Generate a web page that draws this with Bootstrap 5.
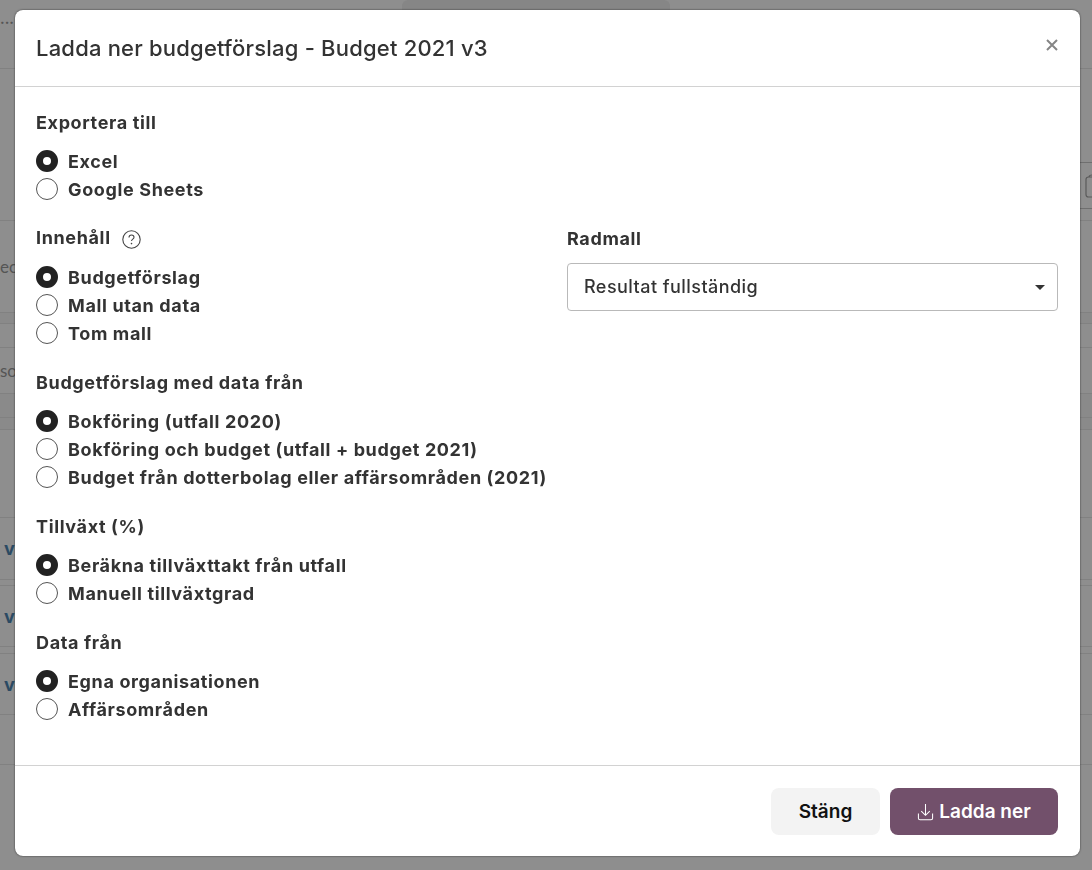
<!DOCTYPE html>
<html lang="sv">
<head>
    <meta charset="UTF-8">
    <meta name="viewport" content="width=device-width, initial-scale=1.0">
    <title>Ladda ner budgetförslag</title>
    <link href="https://cdn.jsdelivr.net/npm/bootstrap@5.3.0/dist/css/bootstrap.min.css" rel="stylesheet">
    <style>
        html, body {
            height: 100%;
        }
        body {
            background-color: #8e8e8e;
            font-family: Inter, "Liberation Sans", sans-serif;
            color: #333;
            overflow: hidden;
        }
        /* page behind the backdrop */
        .bg-page {
            height: 870px;
            overflow: hidden;
            color: #555;
            font-family: Lato, sans-serif;
            font-size: 17px;
        }
        .bg-rule {
            border-bottom: 1px solid #818181;
            display: flex;
            align-items: center;
        }
        .bg-band {
            background: #8a8a8a;
        }
        .bg-top {
            align-items: flex-start;
        }
        .bg-tab {
            width: 268px;
            height: 10px;
            margin-left: 392px;
            background: #868686;
            border-radius: 6px 6px 0 0;
        }
        .bg-dots {
            line-height: 1;
            margin-top: 12px;
            width: 10px;
            font-family: Inter, sans-serif;
            font-weight: 700;
            font-size: 14px;
            flex: none;
        }
        .bg-v {
            color: #2b4a63;
            font-family: Inter, sans-serif;
            font-weight: 700;
            font-size: 18px;
            padding-left: 4px;
        }
        .bg-tool {
            margin-left: auto;
            margin-top: 93px;
            width: 12px;
            height: 47px;
            border-top: 1px solid #6f6f6f;
            border-bottom: 1px solid #6f6f6f;
            display: flex;
            align-items: center;
            justify-content: flex-end;
        }
        /* dialog */
        .export-dialog {
            position: fixed;
            top: 10px;
            left: 15px;
            width: 1065px;
            height: 846px;
            margin: 0;
            max-width: none;
        }
        .export-dialog .modal-content {
            height: 100%;
            background: #fff;
            border: 0;
            border-radius: 8px;
            box-shadow: 0 0 2px rgba(0, 0, 0, .7);
        }
        .export-dialog .modal-header {
            height: 77px;
            padding: 0 22px 0 21px;
            border-bottom: 1px solid #d2d2d2;
            align-items: center;
        }
        .export-title {
            font-size: 22px;
            font-weight: 500;
            letter-spacing: .2px;
            color: #333;
            margin: 0;
            padding-top: 1px;
        }
        .close-x {
            border: 0;
            background: none;
            padding: 0;
            line-height: 0;
            margin-top: -6px;
        }
        .export-dialog .modal-body {
            padding: 22px 22px 0 21px;
        }
        .group-title {
            font-size: 18px;
            font-weight: 700;
            letter-spacing: .63px;
            line-height: 26px;
            color: #333;
            margin: 0 0 11px;
            padding-top: 1px;
        }
        .group-title.title-up {
            padding-top: 0;
            margin-bottom: 12px;
        }
        .radio-group {
            margin-bottom: 22px;
        }
        .radio-row {
            display: flex;
            align-items: center;
            height: 28px;
            margin: 0;
            font-size: 18px;
            font-weight: 700;
            letter-spacing: .63px;
            color: #333;
        }
        .radio-dot {
            width: 22px;
            height: 22px;
            flex: none;
            margin-right: 10px;
            border-radius: 50%;
            border: 1px solid #555;
            background: #fff;
        }
        .radio-dot.on {
            border: 7px solid #222;
        }
        .help-ring {
            width: 19px;
            height: 19px;
            margin: 2px 0 0 11px;
        }
        .left-col {
            width: 531px;
            flex: none;
        }
        .right-col {
            flex: 1;
        }
        .select-wrap {
            height: 48px;
            border: 1px solid #b9b9b9;
            border-radius: 4px;
            padding: 0 12px 0 16px;
            font-size: 18px;
            font-weight: 500;
            letter-spacing: .45px;
            color: #333;
        }
        .select-text {
            padding-bottom: 2px;
        }
        .caret-down {
            width: 0;
            height: 0;
            border-left: 5px solid transparent;
            border-right: 5px solid transparent;
            border-top: 5px solid #333;
        }
        .export-dialog .modal-footer {
            height: 91px;
            padding: 0 22px;
            border-top: 1px solid #d2d2d2;
            gap: 10px;
            align-items: center;
        }
        .export-dialog .modal-footer > * {
            margin: 0;
        }
        .btn-close-soft, .btn-download {
            height: 47px;
            padding-top: 3px;
            border-radius: 8px;
            font-size: 19px;
            font-weight: 600;
            border: 0;
            display: flex;
            align-items: center;
            justify-content: center;
        }
        .btn-close-soft {
            width: 109px;
            background: #f3f3f3;
            color: #111;
        }
        .btn-download {
            width: 168px;
            background: #72506b;
            color: #fff;
            gap: 5px;
        }
    </style>
</head>
<body>

    <!-- page behind the backdrop -->
    <div class="bg-page">
        <div class="bg-rule bg-top" style="height: 69px">
            <span class="bg-dots">...</span>
            <span class="bg-tab"></span>
        </div>
        <div class="bg-rule bg-top" style="height: 152px">
            <span class="bg-tool">
                <svg width="7" height="24" viewBox="0 0 7 24" fill="none" stroke="#5a5a5a" stroke-width="1.2"><path d="M7 3H3.500C2 3 1 4 1 5.500V20.500C1 22 2 23 3.500 23H7M4 3C4 2 5 1 7 1"/></svg>
            </span>
        </div>
        <div class="bg-rule" style="height: 92px">ec</div>
        <div class="bg-rule bg-band" style="height: 11px"></div>
        <div class="bg-rule" style="height: 24px"></div>
        <div class="bg-rule" style="height: 46px">so</div>
        <div class="bg-rule bg-band" style="height: 24px"></div>
        <div class="bg-rule bg-band" style="height: 12px"></div>
        <div class="bg-rule" style="height: 88px"></div>
        <div class="bg-rule bg-v" style="height: 62px">v</div>
        <div class="bg-rule" style="height: 6px"></div>
        <div class="bg-rule bg-v" style="height: 61px">v</div>
        <div class="bg-rule" style="height: 7px"></div>
        <div class="bg-rule bg-v" style="height: 61px">v</div>
        <div class="bg-rule" style="height: 50px"></div>
    </div>

    <div class="modal-dialog export-dialog">
        <div class="modal-content">
            <div class="modal-header">
                <h5 class="export-title">Ladda ner budgetförslag - Budget 2021 v3</h5>
                <button type="button" class="close-x" aria-label="Stäng">
                    <svg width="12" height="12" viewBox="0 0 12 12"><path d="M1 1l10 10M11 1L1 11" stroke="#858585" stroke-width="2" fill="none"/></svg>
                </button>
            </div>
            <div class="modal-body">
                <div class="radio-group">
                    <p class="group-title">Exportera till</p>
                    <label class="radio-row"><span class="radio-dot on"></span>Excel</label>
                    <label class="radio-row"><span class="radio-dot"></span>Google Sheets</label>
                </div>
                <div class="d-flex">
                    <div class="left-col radio-group">
                        <p class="group-title title-up d-flex align-items-center">Innehåll
                            <svg class="help-ring" viewBox="0 0 19 19"><circle cx="9.500" cy="9.500" r="8.700" fill="none" stroke="#444" stroke-width="1.100"/><path d="M7 7.400c0-1.500 1.100-2.400 2.500-2.400s2.500.9 2.500 2.200c0 1.900-2.500 1.900-2.500 3.900" fill="none" stroke="#444" stroke-width="1.100"/><circle cx="9.500" cy="13.600" r=".8" fill="#444"/></svg>
                        </p>
                        <label class="radio-row"><span class="radio-dot on"></span>Budgetförslag</label>
                        <label class="radio-row"><span class="radio-dot"></span>Mall utan data</label>
                        <label class="radio-row"><span class="radio-dot"></span>Tom mall</label>
                    </div>
                    <div class="right-col">
                        <p class="group-title">Radmall</p>
                        <div class="select-wrap d-flex align-items-center justify-content-between">
                            <span class="select-text">Resultat fullständig</span>
                            <span class="caret-down"></span>
                        </div>
                    </div>
                </div>
                <div class="radio-group">
                    <p class="group-title">Budgetförslag med data från</p>
                    <label class="radio-row"><span class="radio-dot on"></span>Bokföring (utfall 2020)</label>
                    <label class="radio-row"><span class="radio-dot"></span>Bokföring och budget (utfall + budget 2021)</label>
                    <label class="radio-row"><span class="radio-dot"></span>Budget från dotterbolag eller affärsområden (2021)</label>
                </div>
                <div class="radio-group">
                    <p class="group-title">Tillväxt (%)</p>
                    <label class="radio-row"><span class="radio-dot on"></span>Beräkna tillväxttakt från utfall</label>
                    <label class="radio-row"><span class="radio-dot"></span>Manuell tillväxtgrad</label>
                </div>
                <div class="radio-group mb-0">
                    <p class="group-title">Data från</p>
                    <label class="radio-row"><span class="radio-dot on"></span>Egna organisationen</label>
                    <label class="radio-row"><span class="radio-dot"></span>Affärsområden</label>
                </div>
            </div>
            <div class="modal-footer">
                <button type="button" class="btn-close-soft">Stäng</button>
                <button type="button" class="btn-download">
                    <svg width="17" height="18" viewBox="0 0 18 19" fill="none" stroke="#fff" stroke-width="1.100"><path d="M9 1v12M4.500 8.500L9 13l4.500-4.500"/><path d="M1.500 11v5c0 1 .7 1.700 1.700 1.700h11.600c1 0 1.700-.7 1.700-1.700v-5"/></svg>
                    Ladda ner
                </button>
            </div>
        </div>
    </div>

    <script src="https://cdn.jsdelivr.net/npm/bootstrap@5.3.0/dist/js/bootstrap.bundle.min.js"></script>
</body>
</html>
